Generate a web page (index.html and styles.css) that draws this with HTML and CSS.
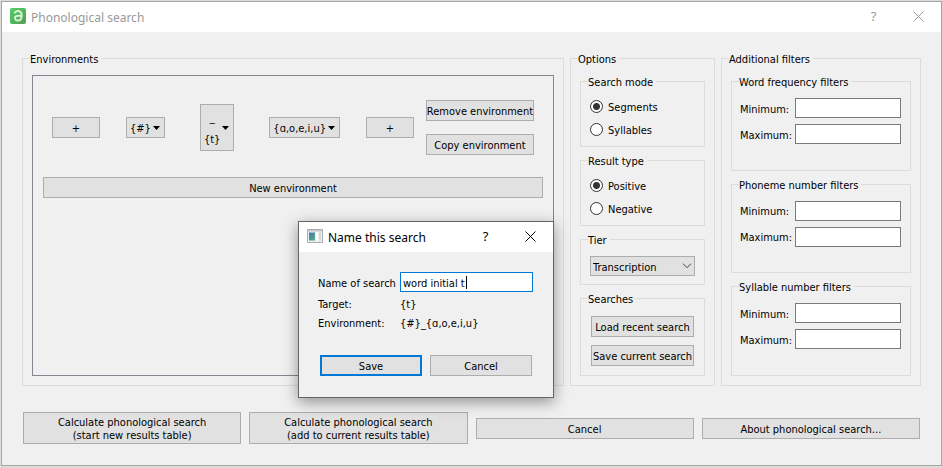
FILE: index.html
```html
<!DOCTYPE html>
<html lang="en">
<head>
<meta charset="utf-8">
<title>Phonological search</title>
<link rel="stylesheet" href="styles.css">
</head>
<body>
<main class="window">
  <header class="titlebar">
    <svg class="app-icon" viewBox="0 0 16 16" aria-hidden="true">
      <defs>
        <linearGradient id="leaf" x1="0" y1="0" x2="1" y2="1">
          <stop offset="0" stop-color="#5cc866"/>
          <stop offset="0.5" stop-color="#50b85b"/>
          <stop offset="1" stop-color="#5a9c56"/>
        </linearGradient>
      </defs>
      <rect width="16" height="16" rx="2" fill="url(#leaf)"/>
      <path d="M4.5 5.2C5.300 3.500 7 2.900 8.500 3.100C10.800 3.500 11.800 5.500 11.600 8.300C11.400 11 10 12.700 7.900 12.600C5.800 12.400 4.800 11 5 9.500C5.300 8 7 7.500 10.500 7.900" fill="none" stroke="#d9f0d8" stroke-width="2"/>
    </svg>
    <h1 class="title">Phonological search</h1>
    <button class="caption-button" type="button" aria-label="Help">?</button>
    <button class="caption-button" type="button" aria-label="Close">
      <svg class="close-icon" viewBox="0 0 11 11"><path d="M.5 .5l10 10M10.500 .5l-10 10"/></svg>
    </button>
  </header>

  <div class="content">
    <div class="panels">
      <fieldset class="group">
        <legend>Environments</legend>
        <div class="frame">
          <div class="environment">
            <button class="button add" type="button" aria-label="Add segment before">+</button>
            <button class="button menu" type="button">{#}<svg class="arrow" viewBox="0 0 7 4"><path d="M0 0h7L3.500 4z"/></svg></button>
            <button class="button menu target" type="button"><span>_<br>{t}</span><svg class="arrow" viewBox="0 0 7 4"><path d="M0 0h7L3.500 4z"/></svg></button>
            <button class="button menu" type="button">{ɑ,o,e,i,u}<svg class="arrow" viewBox="0 0 7 4"><path d="M0 0h7L3.500 4z"/></svg></button>
            <button class="button add" type="button" aria-label="Add segment after">+</button>
            <div class="environment-actions">
              <button class="button" type="button">Remove environment</button>
              <button class="button" type="button">Copy environment</button>
            </div>
          </div>
          <button class="button new-environment" type="button">New environment</button>
        </div>
      </fieldset>

      <fieldset class="group stack">
        <legend>Options</legend>
        <fieldset class="group rows">
          <legend>Search mode</legend>
          <label class="radio"><input type="radio" name="mode" checked><span>Segments</span></label>
          <label class="radio"><input type="radio" name="mode"><span>Syllables</span></label>
        </fieldset>
        <fieldset class="group rows">
          <legend>Result type</legend>
          <label class="radio"><input type="radio" name="result" checked><span>Positive</span></label>
          <label class="radio"><input type="radio" name="result"><span>Negative</span></label>
        </fieldset>
        <fieldset class="group rows">
          <legend>Tier</legend>
          <div class="select-box">
            <select class="select" aria-label="Tier"><option>Transcription</option></select>
            <svg class="chevron" viewBox="0 0 10 6"><path d="M1 .7l4 4 4-4"/></svg>
          </div>
        </fieldset>
        <fieldset class="group rows">
          <legend>Searches</legend>
          <div class="search-buttons">
            <button class="button" type="button">Load recent search</button>
            <button class="button" type="button">Save current search</button>
          </div>
        </fieldset>
      </fieldset>

      <fieldset class="group stack filters">
        <legend>Additional filters</legend>
        <fieldset class="group rows">
          <legend>Word frequency filters</legend>
          <div class="field"><label for="wf-min">Minimum:</label><input class="text" id="wf-min" type="text"></div>
          <div class="field"><label for="wf-max">Maximum:</label><input class="text" id="wf-max" type="text"></div>
        </fieldset>
        <fieldset class="group rows">
          <legend>Phoneme number filters</legend>
          <div class="field"><label for="pn-min">Minimum:</label><input class="text" id="pn-min" type="text"></div>
          <div class="field"><label for="pn-max">Maximum:</label><input class="text" id="pn-max" type="text"></div>
        </fieldset>
        <fieldset class="group rows">
          <legend>Syllable number filters</legend>
          <div class="field"><label for="sn-min">Minimum:</label><input class="text" id="sn-min" type="text"></div>
          <div class="field"><label for="sn-max">Maximum:</label><input class="text" id="sn-max" type="text"></div>
        </fieldset>
      </fieldset>
    </div>

    <div class="actions">
      <button class="button tall" type="button">Calculate phonological search<br>(start new results table)</button>
      <button class="button tall" type="button">Calculate phonological search<br>(add to current results table)</button>
      <button class="button" type="button">Cancel</button>
      <button class="button" type="button">About phonological search...</button>
    </div>
  </div>
</main>

<section class="dialog" role="dialog" aria-labelledby="dialog-title">
  <header class="titlebar dialog-titlebar">
    <svg class="app-icon" viewBox="0 0 16 16" aria-hidden="true">
      <defs>
        <linearGradient id="pane" x1="0" y1="0" x2="1" y2="1">
          <stop offset="0" stop-color="#3f74b5"/>
          <stop offset="1" stop-color="#54b583"/>
        </linearGradient>
      </defs>
      <path d="M.5 1.500h15v13H.5z" fill="#eceef0" stroke="#a9adb2"/>
      <path d="M1 2h14v1.500H1z" fill="#c3c8cd"/>
      <path d="M2 4.500h6v8H2z" fill="url(#pane)"/>
      <path d="M9 4.500h2v8H9z" fill="#fff"/>
      <path d="M12 4.500h2v8h-2z" fill="#d5d8db"/>
    </svg>
    <h2 class="title" id="dialog-title">Name this search</h2>
    <button class="caption-button" type="button" aria-label="Help">?</button>
    <button class="caption-button" type="button" aria-label="Close">
      <svg class="close-icon" viewBox="0 0 11 11"><path d="M.5 .5l10 10M10.500 .5l-10 10"/></svg>
    </button>
  </header>
  <form class="dialog-body">
    <div class="details">
      <label for="search-name">Name of search</label>
      <div class="name-box">
        <input class="text focused" id="search-name" type="text" value="word initial t">
        <i class="caret"></i>
      </div>
      <span>Target:</span><span>{t}</span>
      <span>Environment:</span><span>{#}_{ɑ,o,e,i,u}</span>
    </div>
    <div class="dialog-buttons">
      <button class="button default" type="button">Save</button>
      <button class="button" type="button">Cancel</button>
    </div>
  </form>
</section>
</body>
</html>
```
FILE: styles.css
```css
* {
  box-sizing: border-box;
}

body {
  margin: 0;
  padding: 1px 0 2px 1px;
  min-height: 100vh;
  display: flex;
  background: #dcdcdc;
  color: #000;
  font: 11px/17px "DejaVu Sans Condensed", "Noto Sans", sans-serif;
}

button,
input,
select {
  font: inherit;
  color: inherit;
}

.window {
  flex: 1;
  display: flex;
  flex-direction: column;
  background: #f0f0f0;
  border: 1px solid #a6a6a6;
}

.titlebar {
  display: flex;
  align-items: center;
  height: 30px;
  padding-left: 8px;
  background: #fff;
  color: #999;
}

.app-icon {
  width: 16px;
  height: 16px;
  margin: 0 5px 2px 0;
}

.title {
  flex: 1;
  margin: 0;
  padding-top: 1px;
  font: 12px/19px "Noto Sans", sans-serif;
}

.caption-button {
  display: grid;
  place-items: center;
  width: 45px;
  height: 30px;
  padding: 0 0 2px;
  border: 0;
  background: none;
  font: 13px/18px "Noto Sans", sans-serif;
}

.close-icon {
  width: 11px;
  height: 11px;
  fill: none;
  stroke: currentColor;
}

.content {
  flex: 1;
  display: flex;
  flex-direction: column;
  gap: 26px;
  padding: 19px 20px 21px;
}

.panels {
  flex: 1;
  display: grid;
  grid-template-columns: 1fr 145px 200px;
  gap: 6px;
}

.group {
  display: flex;
  flex-direction: column;
  min-width: 0;
  margin: 0;
  padding: 8px 9px 9px;
  border: 1px solid #dcdcdc;
}

.group legend {
  height: 15px;
  margin-left: -2px;
  padding: 0 3px 0 0;
}

.stack {
  gap: 6px;
}

.rows {
  gap: 6px;
  padding: 9px 9px 8px;
}

.frame {
  flex: 1;
  display: flex;
  flex-direction: column;
  gap: 22px;
  margin-top: 1px;
  padding: 24px 10px;
  border: 1px solid #828790;
}

.environment {
  display: flex;
  align-items: center;
  gap: 26px;
  padding: 0 9px;
}

.button {
  display: flex;
  align-items: center;
  justify-content: center;
  height: 21px;
  padding: 2px 0 0;
  border: 1px solid #adadad;
  background: #e1e1e1;
  white-space: nowrap;
}

.add {
  flex: 0 0 48px;
}

.menu {
  justify-content: space-between;
  flex: 0 0 auto;
  gap: 2px;
  padding: 2px 4px 0 3px;
}

.target {
  height: 47px;
  margin: 0 9px;
  line-height: 22px;
}

.arrow {
  width: 7px;
  height: 4px;
  margin-bottom: 2px;
}

.environment-actions {
  display: flex;
  flex-direction: column;
  gap: 13px;
  width: 108px;
  margin: 0 0 0 -14px;
}

.radio {
  display: flex;
  align-items: center;
  gap: 5px;
  height: 17px;
}

.radio span {
  padding-top: 1px;
}

.radio input {
  appearance: none;
  width: 13px;
  height: 13px;
  margin: 0;
  border: 1px solid #333;
  border-radius: 50%;
  background: #fff;
}

.radio input:checked {
  background: radial-gradient(circle, #333 3px, #fff 4px);
}

.select-box {
  display: grid;
  align-items: center;
}

.select {
  grid-area: 1 / 1;
  appearance: none;
  height: 20px;
  padding: 2px 2px 0;
  border: 1px solid #adadad;
  border-radius: 0;
  background: #e1e1e1;
}

.chevron {
  grid-area: 1 / 1;
  justify-self: end;
  width: 10px;
  height: 6px;
  margin-right: 3px;
  fill: none;
  stroke: #444;
  pointer-events: none;
}

.search-buttons {
  display: flex;
  flex-direction: column;
  gap: 8px;
  padding: 1px;
}

.filters .rows {
  flex: 1;
}

.field {
  display: grid;
  grid-template-columns: 55px 1fr;
  align-items: center;
  margin-left: -1px;
}

.field label,
.details label {
  padding-top: 2px;
}

.text {
  display: block;
  width: 100%;
  min-width: 0;
  height: 20px;
  padding: 2px 2px 0;
  border: 1px solid #7a7a7a;
  background: #fff;
  outline: 0;
}

.actions {
  display: grid;
  grid-template-columns: repeat(4, 1fr);
  align-items: center;
  gap: 8px;
  padding: 0 1px;
}

.tall {
  height: 32px;
  line-height: 13px;
}

.dialog {
  position: absolute;
  left: 298px;
  top: 221px;
  width: 256px;
  border: 1px solid #646464;
  background: #f0f0f0;
  box-shadow: 0 4px 14px rgba(0, 0, 0, 0.4);
}

.dialog-titlebar {
  color: #000;
}

.dialog-body {
  padding: 20px 20px 21px 19px;
}

.details {
  display: grid;
  grid-template-columns: 82px 1fr;
  row-gap: 4px;
  align-items: center;
}

.details span {
  height: 15px;
}

.name-box {
  position: relative;
}

.text.focused {
  border-color: #0078d7;
}

.caret {
  position: absolute;
  left: 66px;
  top: 4px;
  width: 1px;
  height: 13px;
  background: #000;
}

.dialog-buttons {
  display: grid;
  grid-template-columns: 1fr 1fr;
  gap: 8px;
  margin-top: 25px;
  padding: 0 1px 0 2px;
}

.default {
  padding-top: 1px;
  border: 2px solid #0078d7;
}
```
